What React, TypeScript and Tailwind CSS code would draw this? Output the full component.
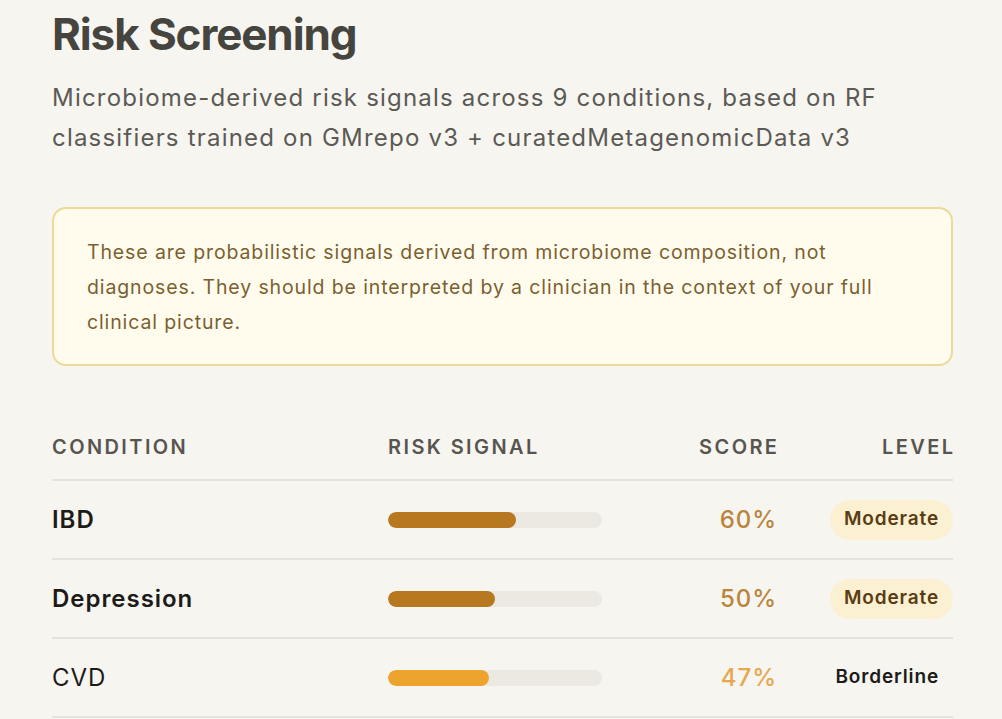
const ROWS = [
  { name: 'IBD', score: 60, level: 'Moderate', strong: true },
  { name: 'Depression', score: 50, level: 'Moderate', strong: true },
  { name: 'CVD', score: 47, level: 'Borderline', strong: false },
]

function Level({ level }: { level: string }) {
  if (level === 'Moderate') {
    return (
      <span className="inline-flex items-center h-[40px] px-[14px] rounded-full bg-[#fcf0d2] text-[#5a3c12] text-[19px] tracking-[0.045em] font-semibold">
        {level}
      </span>
    )
  }
  return <span className="pr-[14px] text-[19px] tracking-[0.045em] font-semibold text-[#1c1b18]">{level}</span>
}

export default function App() {
  return (
    <div className="min-h-screen bg-[#f7f5f0] font-['Inter',sans-serif] antialiased">
      <div className="w-[901px] ml-[52px] pt-[8px]">
        <h1 className="text-[44px] leading-[52px] font-bold tracking-[-0.025em] text-[#45443e]">Risk Screening</h1>
        <p className="mt-[18px] text-[24px] leading-[40px] tracking-[0.05em] text-[#5b5a55]">
          Microbiome-derived risk signals across 9 conditions, based on RF classifiers trained on GMrepo v3 + curatedMetagenomicData v3
        </p>

        <div className="mt-[49px] rounded-[14px] border-2 border-[#ecd99b] bg-[#fffcee] pl-[33px] pr-[36px] pt-[26px] pb-[24px]">
          <p className="text-[19.5px] leading-[35px] tracking-[0.045em] text-[#7a6030]">
            These are probabilistic signals derived from microbiome composition, not diagnoses. They should be interpreted by a clinician in the context of your full clinical picture.
          </p>
        </div>

        <div className="mt-[59px]">
          <div className="grid grid-cols-[336px_250px_1fr_176px] items-center h-[56px] pb-[11px] border-b-2 border-[#e6e3dd] text-[20px] font-semibold tracking-[0.12em] text-[#57554f]">
            <span>CONDITION</span>
            <span>RISK SIGNAL</span>
            <span className="text-right -mr-[0.12em]">SCORE</span>
            <span className="text-right -mr-[0.12em]">LEVEL</span>
          </div>
          {ROWS.map(r => (
            <div key={r.name} className="grid grid-cols-[336px_250px_1fr_176px] items-center h-[79px] border-b-2 border-[#e6e3dd]">
              <span className={`text-[24px] tracking-[0.04em] text-[#1c1b18] ${r.strong ? 'font-semibold' : 'font-normal'}`}>{r.name}</span>
              <div className="w-[214px] h-[16px] rounded-full bg-[#ece9e3] overflow-hidden">
                <div
                  className={`h-full rounded-full ${r.level === 'Moderate' ? 'bg-[#b8781f]' : 'bg-[#eca42f]'}`}
                  style={{ width: `${r.score}%` }}
                />
              </div>
              <span className={`text-right text-[24px] tracking-[0.04em] font-medium ${r.level === 'Moderate' ? 'text-[#b9853d]' : 'text-[#e4a84f]'}`}>
                {r.score}%
              </span>
              <div className="text-right">
                <Level level={r.level} />
              </div>
            </div>
          ))}
        </div>
      </div>
    </div>
  )
}
